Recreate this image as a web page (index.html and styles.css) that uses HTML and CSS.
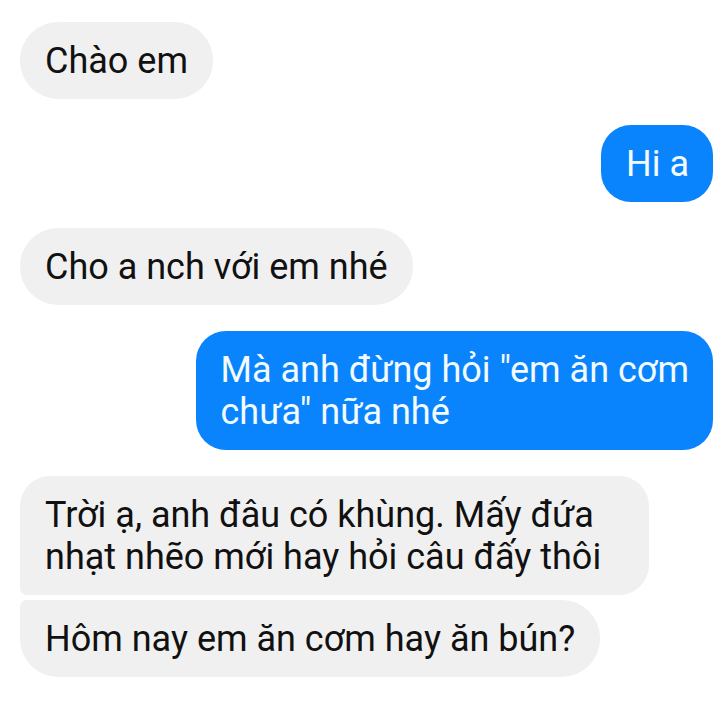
FILE: index.html
```html
<!DOCTYPE html>
<html lang="vi">
<head>
<meta charset="utf-8">
<title>Chat</title>
<link rel="stylesheet" href="styles.css">
</head>
<body>
<div class="chat">
  <div class="bubble in">Chào em</div>
  <div class="bubble out">Hi a</div>
  <div class="bubble in">Cho a nch với em nhé</div>
  <div class="bubble out">Mà anh đừng hỏi "em ăn cơm<br>chưa" nữa nhé</div>
  <div class="group">
    <div class="bubble in first wide">Trời ạ, anh đâu có khùng. Mấy đứa<br>nhạt nhẽo mới hay hỏi câu đấy thôi</div>
    <div class="bubble in last">Hôm nay em ăn cơm hay ăn bún?</div>
  </div>
</div>
</body>
</html>
```

FILE: styles.css
```css
html, body {
  margin: 0;
  padding: 0;
  background: #ffffff;
}

.chat {
  width: 720px;
  height: 720px;
  box-sizing: border-box;
  padding: 22px 7px 0 20px;
  display: flex;
  flex-direction: column;
  gap: 26px;
  font-family: Roboto, "Noto Sans", sans-serif;
  font-size: 36px;
  line-height: 42px;
}

.group {
  display: flex;
  flex-direction: column;
  gap: 5px;
}

.bubble {
  padding: 18px 25px 17px 25px;
  border-radius: 38px;
  white-space: nowrap;
}

.in {
  align-self: flex-start;
  background: #f0f0f0;
  color: #111111;
}

.out {
  align-self: flex-end;
  background: #0a84fc;
  color: #f2fbff;
  border-radius: 30px;
  padding-right: 24px;
}

.first {
  border-radius: 30px 30px 30px 7px;
}

.last {
  border-radius: 7px 38px 38px 38px;
}

.wide {
  padding-right: 48px;
}
```
